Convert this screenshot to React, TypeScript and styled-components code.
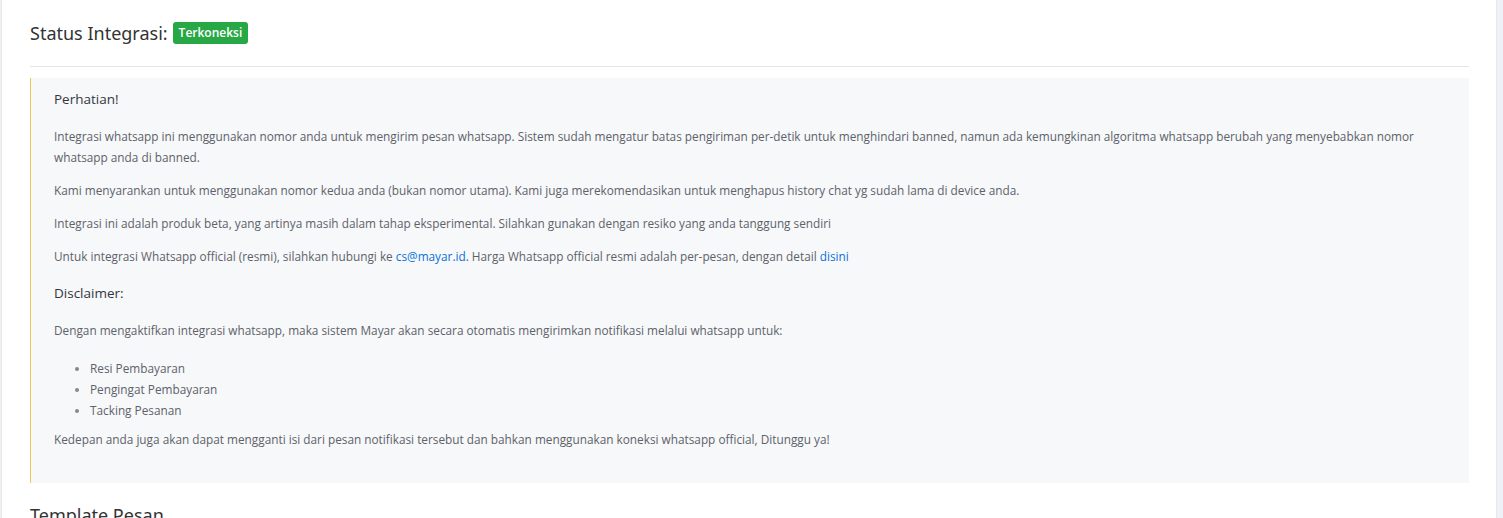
import React from "react";
import styled, { createGlobalStyle } from "styled-components";

const Global = createGlobalStyle`
  html, body { margin: 0; padding: 0; background: #eef1f5; overflow: hidden; }
  body { font-family: "Open Sans", "Noto Sans", sans-serif; }
`;

const Page = styled.div`
  display: flex;
  height: 518px;
  padding-right: 6px;
`;

const Card = styled.div`
  flex: 1;
  margin-left: 1px;
  background: #fff;
  border-left: 1px solid #e6e8eb;
  border-right: 1px solid #e6e8eb;
  padding: 0 27px 0 28px;
`;

const Header = styled.div`
  display: flex;
  align-items: center;
  gap: 5px;
  height: 66px;
  border-bottom: 1px solid #e3e5e8;
`;

const Title = styled.h4`
  margin: 0;
  font-family: "Noto Sans", sans-serif;
  font-size: 18px;
  font-weight: 400;
  color: #333;
`;

const Badge = styled.span`
  background: #28a745;
  color: #fff;
  font-size: 12px;
  font-weight: 600;
  padding: 3px 6px;
  border-radius: 3px;
  line-height: 16px;
`;

const Callout = styled.div`
  margin-top: 11px;
  background: #f7f8fa;
  border-left: 1px solid #f1c552;
  padding: 10px 24px 33px 23px;
  color: #5d6269;
  font-size: 11.8px;
`;

const Heading = styled.h5<{ $top?: number }>`
  margin: ${(p) => p.$top ?? 0}px 0 16px;
  font-size: 13.5px;
  font-weight: 400;
  color: #32373d;
  line-height: 22px;
`;

const P = styled.p<{ $mb?: number }>`
  margin: 0 0 ${(p) => p.$mb ?? 12}px;
  line-height: 21px;
`;

const Link = styled.a`
  color: #0b72d9;
  text-decoration: none;
`;

const List = styled.ul`
  margin: 0 0 8px;
  padding-left: 36px;
  line-height: 21px;
  li::marker { color: #888; }
`;

const Sub = styled.h4`
  margin: 20px 0 0;
  font-family: "Noto Sans", sans-serif;
  font-size: 18px;
  font-weight: 400;
  color: #333;
`;

export default function App() {
  return (
    <>
      <Global />
      <Page>
        <Card>
          <Header>
            <Title>Status Integrasi:</Title>
            <Badge>Terkoneksi</Badge>
          </Header>
          <Callout>
            <Heading>Perhatian!</Heading>
            <P>
              Integrasi whatsapp ini menggunakan nomor anda untuk mengirim pesan whatsapp. Sistem sudah mengatur batas pengiriman per-detik untuk menghindari banned, namun ada kemungkinan algoritma whatsapp berubah yang menyebabkan nomor whatsapp anda di banned.
            </P>
            <P>
              Kami menyarankan untuk menggunakan nomor kedua anda (bukan nomor utama). Kami juga merekomendasikan untuk menghapus history chat yg sudah lama di device anda.
            </P>
            <P>
              Integrasi ini adalah produk beta, yang artinya masih dalam tahap eksperimental. Silahkan gunakan dengan resiko yang anda tanggung sendiri
            </P>
            <P $mb={15}>
              Untuk integrasi Whatsapp official (resmi), silahkan hubungi ke <Link href="#">cs@mayar.id</Link>. Harga Whatsapp official resmi adalah per-pesan, dengan detail <Link href="#">disini</Link>
            </P>
            <Heading>Disclaimer:</Heading>
            <P $mb={17}>
              Dengan mengaktifkan integrasi whatsapp, maka sistem Mayar akan secara otomatis mengirimkan notifikasi melalui whatsapp untuk:
            </P>
            <List>
              <li>Resi Pembayaran</li>
              <li>Pengingat Pembayaran</li>
              <li>Tacking Pesanan</li>
            </List>
            <P $mb={0}>
              Kedepan anda juga akan dapat mengganti isi dari pesan notifikasi tersebut dan bahkan menggunakan koneksi whatsapp official, Ditunggu ya!
            </P>
          </Callout>
          <Sub>Template Pesan</Sub>
        </Card>
      </Page>
    </>
  );
}
